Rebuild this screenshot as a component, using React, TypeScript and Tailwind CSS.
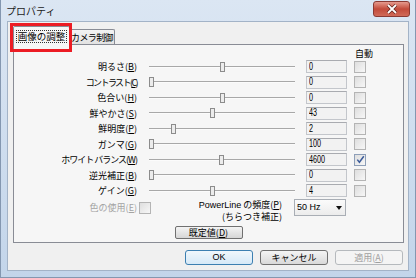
// Diálogo "プロパティ" de la cámara (estilo Windows 7)
import clsx from "clsx"

const JP = "font-['Noto_Sans_CJK_JP',sans-serif]"
const NUM = "font-['Liberation_Sans',sans-serif]"

interface Fila {
  etiqueta: string
  tecla: string
  pos: number
  valor: string
  auto?: boolean
  tracking?: string
}

const filas: Fila[] = [
  { etiqueta: "明るさ", tecla: "B", pos: 222, valor: "0" },
  { etiqueta: "コントラスト", tecla: "C", pos: 151, valor: "0", tracking: "tracking-[-1.6px]" },
  { etiqueta: "色合い", tecla: "H", pos: 222, valor: "0" },
  { etiqueta: "鮮やかさ", tecla: "S", pos: 212, valor: "43" },
  { etiqueta: "鮮明度", tecla: "P", pos: 173, valor: "2" },
  { etiqueta: "ガンマ", tecla: "G", pos: 151, valor: "100" },
  { etiqueta: "ホワイト バランス", tecla: "W", pos: 221, valor: "4600", auto: true, tracking: "tracking-[-1px]" },
  { etiqueta: "逆光補正", tecla: "B", pos: 151, valor: "0" },
  { etiqueta: "ゲイン", tecla: "G", pos: 212, valor: "4" },
]

function Casilla({ marcada }: { marcada?: boolean }) {
  return (
    <span
      className={clsx(
        "flex h-[12px] w-[12px] shrink-0 items-center justify-center border bg-linear-to-br from-[#dedede] to-[#f7f7f7]",
        marcada ? "border-[#8e9fb8]" : "border-[#b4b4b4]",
      )}
    >
      {marcada && (
        <svg width="9" height="9" viewBox="0 0 9 9">
          <path d="M1.3 4.6 L3.4 7.2 L7.8 1.2" stroke="#3b5b9a" strokeWidth="1.5" fill="none" />
        </svg>
      )}
    </span>
  )
}

function Boton({ children, defecto, deshabilitado }: { children: React.ReactNode; defecto?: boolean; deshabilitado?: boolean }) {
  return (
    <button
      className={clsx(
        "flex h-[15px] w-[68px] items-center justify-center rounded-[3px] border text-[9px] leading-none",
        JP,
        defecto && "border-[#3c7fb1] bg-linear-to-b from-[#f0f7fc] to-[#d6e9f7] text-black",
        !defecto && !deshabilitado && "border-[#707070] bg-linear-to-b from-[#f4f4f4] to-[#d9d9d9] text-black",
        deshabilitado && "border-[#b5b9bd] bg-[#f4f4f4] text-[#a0a0a0]",
      )}
    >
      {children}
    </button>
  )
}

function Deslizador({ pos }: { pos: number }) {
  return (
    <div className="relative flex h-[10px] w-[146px] items-center">
      <div className="h-[2px] w-full border-t border-[#a8a8a8] bg-[#fbfbfb]" />
      <div
        className="absolute top-0 h-[10px] w-[5px] border border-[#8c8c8c] bg-[#ececec]"
        style={{ left: pos - 151 }}
      />
    </div>
  )
}

export default function App() {
  return (
    <div className={clsx("flex h-[278px] w-[416px] flex-col overflow-hidden border-x border-b border-[#8497b0] bg-linear-to-b from-[#dbe6f3] to-[#c3d5ea] pb-[6px] text-black", JP)}>
      {/* Barra de título */}
      <div className="flex h-[21px] items-start justify-between pl-[5px] pr-[5px]">
        <span className="mt-[5px] text-[10px] leading-[12px] text-[#1b1b1b]">プロパティ</span>
        <div className="mt-[1px] flex h-[16px] w-[37px] items-center justify-center rounded-[3px] border border-[#8a3a33] bg-linear-to-b from-[#e59a8e] via-[#c24a3a] to-[#d06a58]">
          <svg width="12" height="10" viewBox="0 0 12 10">
            <path d="M2 1 L10 9 M10 1 L2 9" stroke="#5c2019" strokeWidth="3.2" />
            <path d="M2 1 L10 9 M10 1 L2 9" stroke="#ffffff" strokeWidth="1.8" />
          </svg>
        </div>
      </div>

      {/* Área cliente */}
      <div className="mx-[6px] flex h-[250px] flex-col border border-[#a3b3c7] bg-[#f0f0f0]">
        {/* Pestañas */}
        <div className="relative z-10 flex h-[22px] items-end pl-[5px]">
          <div className="-mb-px flex h-[19px] w-[57px] items-center justify-center rounded-t-[2px] border border-b-0 border-[#898c95] bg-[#f6f6f6]">
            <span className="border border-dotted border-[#333] px-[1px] text-[9.5px] leading-[11px]">画像の調整</span>
          </div>
          <div className="flex h-[15px] w-[45px] items-center justify-center rounded-t-[2px] border border-b-0 border-l-0 border-[#898c95] bg-linear-to-b from-[#f3f3f3] to-[#e2e2e2]">
            <span className="text-[9px] leading-[11px] tracking-[-0.6px]">カメラ制御</span>
          </div>
          {/* Marco rojo de resaltado */}
          <div className="absolute left-[2px] top-[1px] z-20 h-[29px] w-[62px] border-[3px] border-[#ec1c24]" />
        </div>

        {/* Panel */}
        <div className="ml-[5px] mr-[4px] flex h-[199px] flex-col border border-[#898c95] bg-[#f6f6f6] pt-[2px]">
          <div className="flex h-[12px] items-center">
            <span className="ml-[341px] text-[9px] leading-none">自動</span>
          </div>

          {filas.map((fila, i) => (
            <div key={i} className="flex h-[15.5px] items-center">
              <span className={clsx("w-[123px] whitespace-pre text-right text-[9px] leading-none", fila.tracking)}>
                {fila.etiqueta}(<u>{fila.tecla}</u>)
              </span>
              <div className="ml-[12px]">
                <Deslizador pos={fila.pos} />
              </div>
              <div className="ml-[11px] flex h-[13px] w-[41px] items-center border border-[#c3c6cb] border-t-[#a9abb0] bg-[#f2f2f2] pl-[2px]">
                <span className={clsx("inline-block origin-left scale-x-[0.72] text-[10px] leading-none", NUM)}>{fila.valor}</span>
              </div>
              <div className="ml-[7px]">
                <Casilla marcada={fila.auto} />
              </div>
            </div>
          ))}

          {/* Uso de color / frecuencia */}
          <div className="flex h-[18px] items-center">
            <span className="w-[123px] whitespace-nowrap text-right text-[9px] leading-none text-[#a3a3a3]">
              色の使用(<u>E</u>)
            </span>
            <div className="ml-[2px]">
              <Casilla />
            </div>
            <div className="flex w-[131px] flex-col items-end self-start text-[9px] leading-[12px]">
              <span className="whitespace-nowrap">
                <span className={NUM}>PowerLine</span> の頻度(<u>P</u>)
              </span>
              <span className="whitespace-nowrap">(ちらつき補正)</span>
            </div>
            <div className="ml-[12px] flex h-[17px] w-[52px] items-center justify-between border border-[#a9aeb5] bg-linear-to-b from-[#fbfbfb] to-[#ececec] pl-[2px] pr-[3px]">
              <span className={clsx("text-[9px] leading-none", NUM)}>50 Hz</span>
              <svg width="6" height="4" viewBox="0 0 6 4">
                <path d="M0 0 H6 L3 4 Z" fill="#111" />
              </svg>
            </div>
          </div>

          {/* Valores por defecto */}
          <div className="mt-[9px] flex justify-center">
            <button className="flex h-[13px] w-[68px] items-center justify-center rounded-[2px] border border-[#707070] bg-linear-to-b from-[#f4f4f4] to-[#d6d6d6] text-[9px] leading-none">
              既定値(<u>D</u>)
            </button>
          </div>
        </div>

        {/* Botones inferiores */}
        <div className="mt-[7px] flex justify-end gap-[7px] pr-[5px]">
          <Boton defecto>
            <span className={NUM}>OK</span>
          </Boton>
          <Boton>キャンセル</Boton>
          <Boton deshabilitado>
            適用(<u>A</u>)
          </Boton>
        </div>
      </div>
    </div>
  )
}
